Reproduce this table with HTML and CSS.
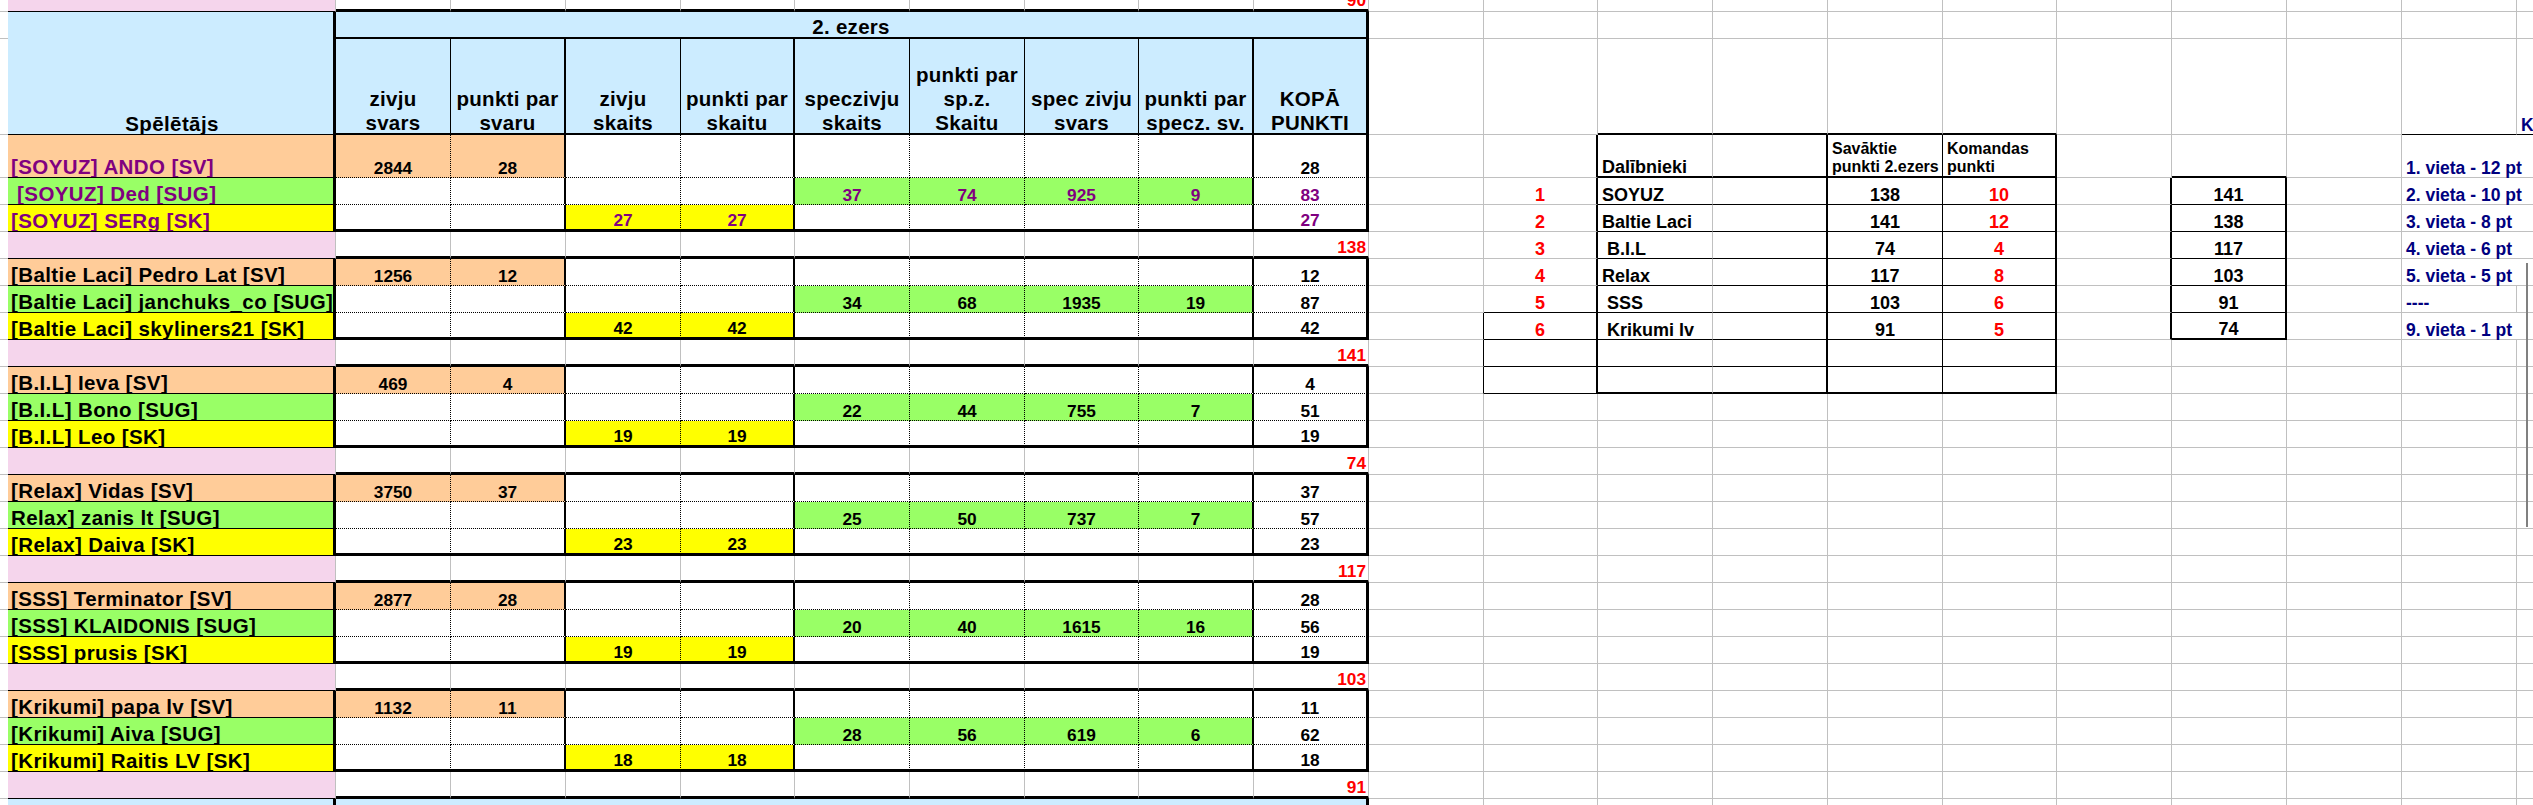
FILE: index.html
```html
<!DOCTYPE html>
<html lang="lv">
<head>
<meta charset="utf-8">
<title>2. ezers</title>
<link rel="stylesheet" href="styles.css">
</head>
<body>
<div class="sheet">

<div class="row r0">
<i class="z"></i><i class="a pk"></i><i class="B3"></i><i class="B3"></i><i class="B3"></i><i class="B3"></i><i class="B3"></i><i class="B3"></i><i class="B3"></i><i class="B3"></i><i class="B3 tot red">90</i>
<i></i><i></i><i></i><i></i><i></i><i></i><i></i><i></i><i></i><i></i><i></i>
</div>

<div class="row r1">
<i class="z"></i><i class="a bl B0"></i><i class="span9 bl hd B2 R3">2. ezers</i>
<i></i><i></i><i></i><i></i><i></i><i></i><i></i><i></i><i></i><i></i><i></i>
</div>

<div class="row r2">
<i class="z"></i><i class="a bl hA">Spēlētājs</i>
<i class="hd bl R1"><span>zivju<br>svars</span></i>
<i class="hd bl R2"><span>punkti par<br>svaru</span></i>
<i class="hd bl R1"><span>zivju<br>skaits</span></i>
<i class="hd bl R2"><span>punkti par<br>skaitu</span></i>
<i class="hd bl R1"><span>speczivju<br>skaits</span></i>
<i class="hd bl R1"><span>punkti par<br>sp.z.<br>Skaitu</span></i>
<i class="hd bl R1"><span>spec zivju<br>svars</span></i>
<i class="hd bl R2"><span>punkti par<br>specz. sv.</span></i>
<i class="hd bl R3"><span>KOPĀ<br>PUNKTI</span></i>
<i></i><i></i><i class="B2"></i><i class="B2"></i><i class="B2"></i><i class="B2"></i><i></i><i></i><i></i><i class="B1"></i><i class="B1 lbl nv">K</i>
</div>

<div class="row r3">
<i class="z"></i><i class="a or p">[SOYUZ] ANDO [SV]</i><i class="m or">2844</i><i class="m or R2">28</i><i class="m"></i><i class="m R2"></i><i class="m"></i><i class="m"></i><i class="m"></i><i class="m R2"></i><i class="m R3">28</i>
<i></i><i class="R2"></i><i class="B2 th">Dalībnieki</i><i class="B2 R2"></i><i class="B2 R1 th2">Savāktie<br>punkti 2.ezers</i><i class="B2 R2 th2">Komandas<br>punkti</i><i></i><i class="B2"></i><i></i><i class="R0 lbl nv">1. vieta - 12 pt</i><i></i>
</div>

<div class="row">
<i class="z"></i><i class="a gr p">&nbsp;[SOYUZ] Ded [SUG]</i><i class="m"></i><i class="m R2"></i><i class="m"></i><i class="m R2"></i><i class="m gr p">37</i><i class="m gr p">74</i><i class="m gr p">925</i><i class="m gr p R2">9</i><i class="m p R3">83</i>
<i></i><i class="R2 tc red">1</i><i class="B1 tn">SOYUZ</i><i class="B1 R2"></i><i class="B1 R1 tc">138</i><i class="B1 R2 tc red">10</i><i class="R2"></i><i class="B1 R2 tc">141</i><i></i><i class="R0 lbl nv">2. vieta - 10 pt</i><i></i>
</div>

<div class="row">
<i class="z"></i><i class="a ye p">[SOYUZ] SERg [SK]</i><i class="m B3"></i><i class="m R2 B3"></i><i class="m ye p B3">27</i><i class="m ye p R2 B3">27</i><i class="m B3"></i><i class="m B3"></i><i class="m B3"></i><i class="m R2 B3"></i><i class="m p R3 B3">27</i>
<i></i><i class="R2 tc red">2</i><i class="B1 tn">Baltie Laci</i><i class="B1 R2"></i><i class="B1 R1 tc">141</i><i class="B1 R2 tc red">12</i><i class="R2"></i><i class="B1 R2 tc">138</i><i></i><i class="R0 lbl nv">3. vieta - 8 pt</i><i></i>
</div>

<div class="row">
<i class="z"></i><i class="a pk"></i><i class="B3"></i><i class="B3"></i><i class="B3"></i><i class="B3"></i><i class="B3"></i><i class="B3"></i><i class="B3"></i><i class="B3"></i><i class="B3 tot red">138</i>
<i></i><i class="R2 tc red">3</i><i class="B1 tn">&nbsp;B.I.L</i><i class="B1 R2"></i><i class="B1 R1 tc">74</i><i class="B1 R2 tc red">4</i><i class="R2"></i><i class="B1 R2 tc">117</i><i></i><i class="R0 lbl nv">4. vieta - 6 pt</i><i></i>
</div>

<div class="row">
<i class="z"></i><i class="a or">[Baltie Laci] Pedro Lat [SV]</i><i class="m or">1256</i><i class="m or R2">12</i><i class="m"></i><i class="m R2"></i><i class="m"></i><i class="m"></i><i class="m"></i><i class="m R2"></i><i class="m R3">12</i>
<i></i><i class="R2 tc red">4</i><i class="B1 tn">Relax</i><i class="B1 R2"></i><i class="B1 R1 tc">117</i><i class="B1 R2 tc red">8</i><i class="R2"></i><i class="B1 R2 tc">103</i><i></i><i class="R0 lbl nv">5. vieta - 5 pt</i><i></i>
</div>

<div class="row">
<i class="z"></i><i class="a gr">[Baltie Laci] janchuks_co [SUG]</i><i class="m"></i><i class="m R2"></i><i class="m"></i><i class="m R2"></i><i class="m gr">34</i><i class="m gr">68</i><i class="m gr">1935</i><i class="m gr R2">19</i><i class="m R3">87</i>
<i></i><i class="R2 B1 tc red">5</i><i class="B1 tn">&nbsp;SSS</i><i class="B1 R2"></i><i class="B1 R1 tc">103</i><i class="B1 R2 tc red">6</i><i class="R2"></i><i class="B1 R2 tc">91</i><i></i><i class="lbl nv">----</i><i></i>
</div>

<div class="row">
<i class="z"></i><i class="a ye">[Baltie Laci] skyliners21 [SK]</i><i class="m B3"></i><i class="m R2 B3"></i><i class="m ye B3">42</i><i class="m ye R2 B3">42</i><i class="m B3"></i><i class="m B3"></i><i class="m B3"></i><i class="m R2 B3"></i><i class="m R3 B3">42</i>
<i class="R1"></i><i class="R2 B1 tc red">6</i><i class="B1 tn">&nbsp;Krikumi lv</i><i class="B1 R2"></i><i class="B1 R1 tc">91</i><i class="B1 R2 tc red">5</i><i class="R2"></i><i class="B2 R2 tc">74</i><i></i><i class="R0 lbl nv">9. vieta - 1 pt</i><i></i>
</div>

<div class="row">
<i class="z"></i><i class="a pk"></i><i class="B3"></i><i class="B3"></i><i class="B3"></i><i class="B3"></i><i class="B3"></i><i class="B3"></i><i class="B3"></i><i class="B3"></i><i class="B3 tot red">141</i>
<i class="R1"></i><i class="R2 B1"></i><i class="B1"></i><i class="B1 R2"></i><i class="B1 R1"></i><i class="B1 R2"></i><i></i><i></i><i></i><i></i><i></i>
</div>

<div class="row">
<i class="z"></i><i class="a or">[B.I.L] Ieva [SV]</i><i class="m or">469</i><i class="m or R2">4</i><i class="m"></i><i class="m R2"></i><i class="m"></i><i class="m"></i><i class="m"></i><i class="m R2"></i><i class="m R3">4</i>
<i class="R1"></i><i class="R2 B1"></i><i class="B2"></i><i class="B2 R2"></i><i class="B2 R1"></i><i class="B2 R2"></i><i></i><i></i><i></i><i></i><i></i>
</div>

<div class="row">
<i class="z"></i><i class="a gr">[B.I.L] Bono [SUG]</i><i class="m"></i><i class="m R2"></i><i class="m"></i><i class="m R2"></i><i class="m gr">22</i><i class="m gr">44</i><i class="m gr">755</i><i class="m gr R2">7</i><i class="m R3">51</i>
<i></i><i></i><i></i><i></i><i></i><i></i><i></i><i></i><i></i><i></i><i></i>
</div>

<div class="row">
<i class="z"></i><i class="a ye">[B.I.L] Leo [SK]</i><i class="m B3"></i><i class="m R2 B3"></i><i class="m ye B3">19</i><i class="m ye R2 B3">19</i><i class="m B3"></i><i class="m B3"></i><i class="m B3"></i><i class="m R2 B3"></i><i class="m R3 B3">19</i>
<i></i><i></i><i></i><i></i><i></i><i></i><i></i><i></i><i></i><i></i><i></i>
</div>

<div class="row">
<i class="z"></i><i class="a pk"></i><i class="B3"></i><i class="B3"></i><i class="B3"></i><i class="B3"></i><i class="B3"></i><i class="B3"></i><i class="B3"></i><i class="B3"></i><i class="B3 tot red">74</i>
<i></i><i></i><i></i><i></i><i></i><i></i><i></i><i></i><i></i><i></i><i></i>
</div>

<div class="row">
<i class="z"></i><i class="a or">[Relax] Vidas [SV]</i><i class="m or">3750</i><i class="m or R2">37</i><i class="m"></i><i class="m R2"></i><i class="m"></i><i class="m"></i><i class="m"></i><i class="m R2"></i><i class="m R3">37</i>
<i></i><i></i><i></i><i></i><i></i><i></i><i></i><i></i><i></i><i></i><i></i>
</div>

<div class="row">
<i class="z"></i><i class="a gr">Relax] zanis lt [SUG]</i><i class="m"></i><i class="m R2"></i><i class="m"></i><i class="m R2"></i><i class="m gr">25</i><i class="m gr">50</i><i class="m gr">737</i><i class="m gr R2">7</i><i class="m R3">57</i>
<i></i><i></i><i></i><i></i><i></i><i></i><i></i><i></i><i></i><i></i><i></i>
</div>

<div class="row">
<i class="z"></i><i class="a ye">[Relax] Daiva [SK]</i><i class="m B3"></i><i class="m R2 B3"></i><i class="m ye B3">23</i><i class="m ye R2 B3">23</i><i class="m B3"></i><i class="m B3"></i><i class="m B3"></i><i class="m R2 B3"></i><i class="m R3 B3">23</i>
<i></i><i></i><i></i><i></i><i></i><i></i><i></i><i></i><i></i><i></i><i></i>
</div>

<div class="row">
<i class="z"></i><i class="a pk"></i><i class="B3"></i><i class="B3"></i><i class="B3"></i><i class="B3"></i><i class="B3"></i><i class="B3"></i><i class="B3"></i><i class="B3"></i><i class="B3 tot red">117</i>
<i></i><i></i><i></i><i></i><i></i><i></i><i></i><i></i><i></i><i></i><i></i>
</div>

<div class="row">
<i class="z"></i><i class="a or">[SSS] Terminator [SV]</i><i class="m or">2877</i><i class="m or R2">28</i><i class="m"></i><i class="m R2"></i><i class="m"></i><i class="m"></i><i class="m"></i><i class="m R2"></i><i class="m R3">28</i>
<i></i><i></i><i></i><i></i><i></i><i></i><i></i><i></i><i></i><i></i><i></i>
</div>

<div class="row">
<i class="z"></i><i class="a gr">[SSS] KLAIDONIS [SUG]</i><i class="m"></i><i class="m R2"></i><i class="m"></i><i class="m R2"></i><i class="m gr">20</i><i class="m gr">40</i><i class="m gr">1615</i><i class="m gr R2">16</i><i class="m R3">56</i>
<i></i><i></i><i></i><i></i><i></i><i></i><i></i><i></i><i></i><i></i><i></i>
</div>

<div class="row">
<i class="z"></i><i class="a ye">[SSS] prusis [SK]</i><i class="m B3"></i><i class="m R2 B3"></i><i class="m ye B3">19</i><i class="m ye R2 B3">19</i><i class="m B3"></i><i class="m B3"></i><i class="m B3"></i><i class="m R2 B3"></i><i class="m R3 B3">19</i>
<i></i><i></i><i></i><i></i><i></i><i></i><i></i><i></i><i></i><i></i><i></i>
</div>

<div class="row">
<i class="z"></i><i class="a pk"></i><i class="B3"></i><i class="B3"></i><i class="B3"></i><i class="B3"></i><i class="B3"></i><i class="B3"></i><i class="B3"></i><i class="B3"></i><i class="B3 tot red">103</i>
<i></i><i></i><i></i><i></i><i></i><i></i><i></i><i></i><i></i><i></i><i></i>
</div>

<div class="row">
<i class="z"></i><i class="a or">[Krikumi] papa lv [SV]</i><i class="m or">1132</i><i class="m or R2">11</i><i class="m"></i><i class="m R2"></i><i class="m"></i><i class="m"></i><i class="m"></i><i class="m R2"></i><i class="m R3">11</i>
<i></i><i></i><i></i><i></i><i></i><i></i><i></i><i></i><i></i><i></i><i></i>
</div>

<div class="row">
<i class="z"></i><i class="a gr">[Krikumi] Aiva [SUG]</i><i class="m"></i><i class="m R2"></i><i class="m"></i><i class="m R2"></i><i class="m gr">28</i><i class="m gr">56</i><i class="m gr">619</i><i class="m gr R2">6</i><i class="m R3">62</i>
<i></i><i></i><i></i><i></i><i></i><i></i><i></i><i></i><i></i><i></i><i></i>
</div>

<div class="row">
<i class="z"></i><i class="a ye">[Krikumi] Raitis LV [SK]</i><i class="m B3"></i><i class="m R2 B3"></i><i class="m ye B3">18</i><i class="m ye R2 B3">18</i><i class="m B3"></i><i class="m B3"></i><i class="m B3"></i><i class="m R2 B3"></i><i class="m R3 B3">18</i>
<i></i><i></i><i></i><i></i><i></i><i></i><i></i><i></i><i></i><i></i><i></i>
</div>

<div class="row">
<i class="z"></i><i class="a pk"></i><i class="B3"></i><i class="B3"></i><i class="B3"></i><i class="B3"></i><i class="B3"></i><i class="B3"></i><i class="B3"></i><i class="B3"></i><i class="B3 tot red">91</i>
<i></i><i></i><i></i><i></i><i></i><i></i><i></i><i></i><i></i><i></i><i></i>
</div>

<div class="row">
<i class="z"></i><i class="a bl"></i><i class="span9 bl R3"></i>
<i></i><i></i><i></i><i></i><i></i><i></i><i></i><i></i><i></i><i></i><i></i>
</div>

</div>
<div class="edge"></div>
</body>
</html>
```

FILE: styles.css
```css
* { box-sizing: border-box; }

html, body {
  margin: 0;
  padding: 0;
  background: #fff;
  overflow: hidden;
}

body {
  width: 2533px;
  height: 805px;
  position: relative;
  font-family: "Liberation Sans", Arial, sans-serif;
  font-weight: bold;
  color: #000;
}

.sheet {
  display: flex;
  flex-direction: column;
  width: 2632px;
}

.row {
  display: grid;
  grid-template-columns: 8px 328px 115px 115px 115px 114px 115px 115px 114px 115px 115px 115px 114px 115px 115px 115px 114px 115px 115px 115px 115px 115px;
  height: 27px;
  flex: none;
}

.r0 { height: 12px; }
.r1 { height: 27px; }
.r2 { height: 96px; }
.r3 { height: 43px; }

.row > * {
  display: flex;
  align-items: flex-end;
  min-width: 0;
  overflow: hidden;
  white-space: nowrap;
  font-style: normal;
  font-size: 17.3px;
  line-height: 1;
  border-right: 1px solid #c0c0c0;
  border-bottom: 1px solid #c0c0c0;
}

/* spacer column left of the sheet */
.z { border-right: 0 !important; }

/* player name column */
.a {
  padding-left: 3px;
  font-size: 20.5px;
  letter-spacing: 0.4px;
  border-right: 3px solid #000;
  border-bottom: 1px solid #000;
}
.hA { justify-content: center; }
.pk { background: #f5d5ec; border-right: 1px solid #c0c0c0; }

/* main data cells */
.m {
  justify-content: center;
  border-right: 1px dotted #000;
  border-bottom: 1px dotted #000;
}

/* header cells */
.hd {
  justify-content: center;
  text-align: center;
  font-size: 20.5px;
  letter-spacing: 0.3px;
  line-height: 24px;
  overflow: visible;
  border-right: 1px solid #000;
  border-bottom: 2px solid #000;
}
.hd span { margin-bottom: -2px; }
.r1 .hd { line-height: 1; }

.span9 { grid-column: span 9; }

/* red subtotal */
.tot {
  justify-content: flex-end;
  padding-right: 2px;
}

/* team table */
.th { padding-left: 4px; font-size: 18px; }
.th2 { padding-left: 4px; font-size: 16px; line-height: 18px; }
.tn { padding-left: 4px; font-size: 18px; }
.tc { justify-content: center; font-size: 18px; }

/* right-hand labels */
.lbl {
  padding-left: 4px;
  font-size: 17.5px;
  overflow: visible;
}

/* borders */
.R0 { border-right: 0; }
.R1 { border-right: 1px solid #000; }
.R2 { border-right: 2px solid #000; }
.R3 { border-right: 3px solid #000; }
.B0 { border-bottom: 0; }
.B1 { border-bottom: 1px solid #000; }
.B2 { border-bottom: 2px solid #000; }
.B3 { border-bottom: 3px solid #000; }

/* fills */
.bl { background: #ccecff; }
.or { background: #ffcc99; }
.gr { background: #99ff66; }
.ye { background: #ffff00; }

/* text colours */
.p { color: #800080; }
.red { color: #ff0000; }
.nv { color: #000080; }

/* the grey edge of a shape lying over the right side */
.edge {
  position: absolute;
  left: 2526px;
  top: 263px;
  width: 2px;
  height: 264px;
  background: #808080;
}
```
